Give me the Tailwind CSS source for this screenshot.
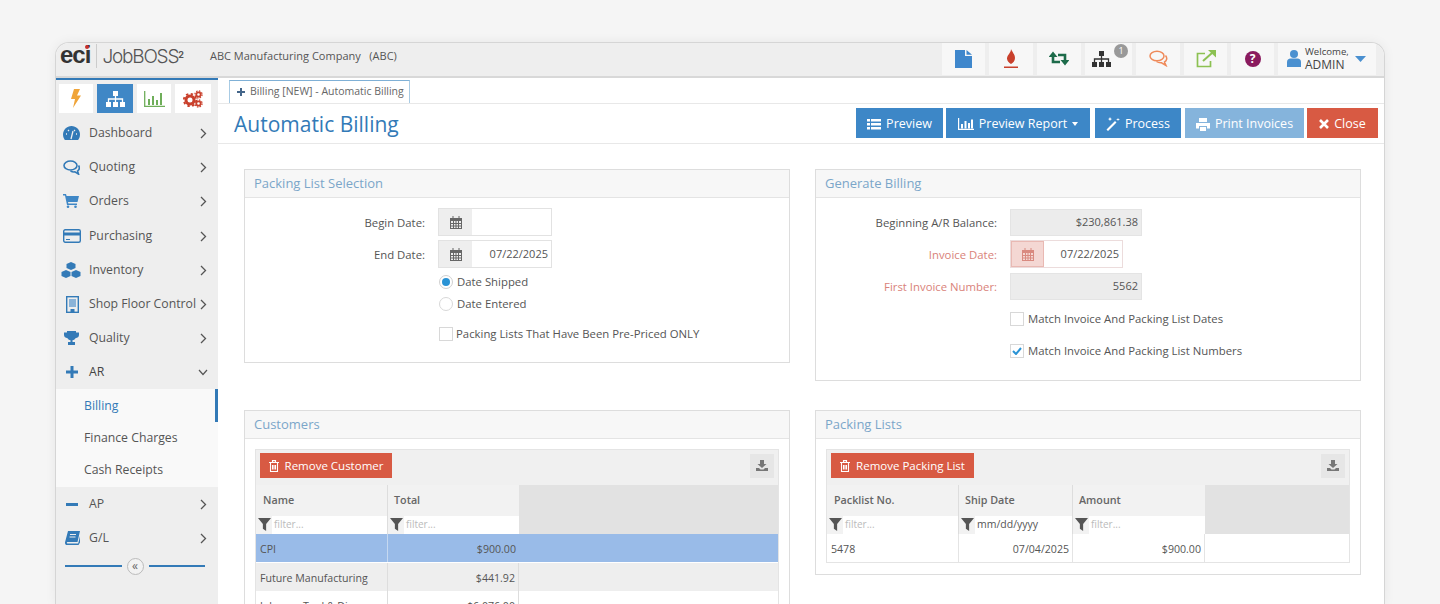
<!DOCTYPE html>
<html>
<head>
<meta charset="utf-8">
<script src="https://cdn.jsdelivr.net/npm/@tailwindcss/browser@4"></script>
</head>
<body class="bg-[#f5f5f5] h-[604px] overflow-hidden font-['Open_Sans',sans-serif] text-[11.35px] text-[#555]">
<div class="mx-[55px] mt-[42px] h-[562px] rounded-t-[14px] border-x border-t border-[#d5d5d5] bg-white shadow-[0_0_12px_rgba(0,0,0,0.06)] overflow-hidden flex flex-col">

  <header class="h-[35px] shrink-0 bg-[#eeeeee] border-b-2 border-[#d8d8d8] flex items-center pl-[4px]">
    <div class="flex items-center w-[150px] shrink-0 mb-[7px]">
      <span class="relative font-['Liberation_Sans',sans-serif] font-bold text-[24px] leading-none tracking-[-1px] text-[#333] -top-[1px]">eci<span class="absolute right-[1px] top-[2px] w-[4px] h-[4px] rounded-full bg-[#c9302c]"></span></span>
      <span class="w-px h-[24px] bg-[#ccc] ml-[6px] mr-[5px]"></span>
      <span class="font-['Inter',sans-serif] font-light text-[19px] leading-none tracking-[-1.2px] text-[#555]">JobBOSS<sup class="font-bold text-[9px]">2</sup></span>
    </div>
    <span class="text-[11px] text-[#555] mb-[7px]">ABC Manufacturing Company&nbsp;&nbsp; (ABC)</span>
    <div class="ml-auto flex items-center gap-[4px] pr-[8px] h-[32px] mb-[2px]">
      <div class="w-[43px] h-[32px] bg-[#f7f7f7] flex items-center justify-center">
        <svg class="w-[17px] h-[18px]" viewBox="0 0 17 18"><path fill="#3f87cc" d="M0 0h10v6h7v12H0z"/><path fill="#3f87cc" d="M11.500 0 17 4.700h-5.500z"/></svg>
      </div>
      <div class="w-[44px] h-[32px] bg-[#f7f7f7] flex items-center justify-center">
        <svg class="w-[16px] h-[20px]" viewBox="0 0 16 20"><path fill="#c9402c" d="M8 0c1 3 4 5 4 9 0 3-2 5-4 6-2-1-4-3-4-5.500C4 6 8 4 8 0z"/><rect x="1" y="17.500" width="14" height="1.500" fill="#c9402c"/></svg>
      </div>
      <div class="w-[44px] h-[32px] bg-[#f7f7f7] flex items-center justify-center">
        <svg class="w-[20px] h-[15px]" viewBox="0 0 20 15"><path fill="none" stroke="#1d6b4a" stroke-width="2.600" d="M4 5v6h7M16 10V4H9"/><path fill="#1d6b4a" d="M-.5 6 4 .5 8.500 6zM11.500 9 16 14.500 20.500 9z"/></svg>
      </div>
      <div class="w-[47px] h-[32px] bg-[#f7f7f7] flex items-center pl-[7px] relative">
        <svg class="w-[19px] h-[16px]" viewBox="0 0 19 16"><path fill="#333" d="M7 0h5v5H7zM0 11h5v5H0zM7 11h5v5H7zM14 11h5v5h-5z"/><path fill="none" stroke="#333" stroke-width="1.300" d="M9.500 5v6M2.500 11V8h14v3"/></svg>
        <span class="absolute right-[4px] top-[1px] w-[14px] h-[14px] rounded-full bg-[#999] text-white text-[9px] leading-[14px] text-center">1</span>
      </div>
      <div class="w-[44px] h-[32px] bg-[#f7f7f7] flex items-center justify-center">
        <svg class="w-[19px] h-[17px]" viewBox="0 0 19 17"><ellipse cx="8" cy="6" rx="7" ry="4.800" fill="none" stroke="#ef8a5a" stroke-width="1.500"/><path fill="none" stroke="#ef8a5a" stroke-width="1.500" d="M16.500 5.500c2 2.500 1.500 5-1 6.500l1.500 3.500-4.500-2.700c-2 .2-3.500-.2-5-1.300"/></svg>
      </div>
      <div class="w-[43px] h-[32px] bg-[#f7f7f7] flex items-center justify-center">
        <svg class="w-[20px] h-[18px]" viewBox="0 0 20 18"><path fill="none" stroke="#8cc152" stroke-width="1.700" d="M9 3.500H1.500v13h13V11"/><path fill="none" stroke="#8cc152" stroke-width="2" d="M7 11 16 3"/><path fill="#8cc152" d="M12 0h8v7.500z"/></svg>
      </div>
      <div class="w-[43px] h-[32px] bg-[#f7f7f7] flex items-center justify-center">
        <span class="w-[16px] h-[16px] rounded-full bg-[#8a1a5e] text-white font-bold text-[12px] leading-[16px] text-center">?</span>
      </div>
      <div class="w-[98px] h-[32px] bg-[#f7f7f7] flex items-center pl-[9px]">
        <svg class="w-[14px] h-[17px] shrink-0" viewBox="0 0 14 17"><circle cx="7" cy="4" r="4" fill="#4a90d0"/><path fill="#4a90d0" d="M0 17v-5c0-2 1.500-3.500 3.500-3.500h7c2 0 3.500 1.500 3.500 3.500v5z"/></svg>
        <div class="ml-[4px] leading-none">
          <div class="text-[9.600px] leading-[12px] text-[#444]">Welcome,</div>
          <div class="text-[12px] leading-[13px] text-[#444]">ADMIN</div>
        </div>
        <svg class="w-[11px] h-[6px] ml-[6px]" viewBox="0 0 11 6"><path fill="#4a90d0" d="M0 0h11L5.500 6z"/></svg>
      </div>
    </div>
  </header>

  <div class="flex flex-1 min-h-0">
    <aside class="w-[162px] shrink-0 bg-[#eeeeee] border-t-2 border-[#337ab7] text-[12.250px]">
      <div class="flex gap-[4px] pl-[3px] pt-[4px] h-[34px]">
        <div class="w-[34px] h-[29px] bg-white flex items-center justify-center">
          <svg class="w-[10px] h-[19px]" viewBox="0 0 10 19"><path fill="#f0a53a" d="M3 0h6L6 6.500h4L2 19l2-9H0z"/></svg>
        </div>
        <div class="w-[36px] h-[29px] bg-[#3f87c6] flex items-center justify-center">
          <svg class="w-[19px] h-[16px]" viewBox="0 0 19 16"><path fill="#fff" d="M7 0h5v5H7zM0 11h5v5H0zM7 11h5v5H7zM14 11h5v5h-5z"/><path fill="none" stroke="#fff" stroke-width="1.300" d="M9.500 5v6M2.500 11V8h14v3"/></svg>
        </div>
        <div class="w-[34px] h-[29px] bg-white flex items-center justify-center">
          <svg class="w-[21px] h-[16px]" viewBox="0 0 21 16"><path fill="none" stroke="#6fae5a" stroke-width="1.300" d="M.7 0v15.300H21"/><path fill="#6fae5a" d="M4 8h2v6H4zM8 5h2v9H8zM12 9h2v5h-2zM16 2h2v12h-2z"/></svg>
        </div>
        <div class="w-[36px] h-[29px] bg-white flex items-center justify-center">
          <svg class="w-[20px] h-[18px]" viewBox="0 0 20 18"><g fill="none" stroke="#c9402c"><circle cx="7" cy="10" r="4" stroke-width="3"/><circle cx="7" cy="10" r="6.200" stroke-width="1.800" stroke-dasharray="2.400 2.470"/><circle cx="15.500" cy="4.500" r="2.200" stroke-width="1.800"/><circle cx="15.500" cy="4.500" r="3.600" stroke-width="1.200" stroke-dasharray="1.500 1.330"/><circle cx="15.500" cy="13.500" r="2.200" stroke-width="1.800"/><circle cx="15.500" cy="13.500" r="3.600" stroke-width="1.200" stroke-dasharray="1.500 1.330"/></g></svg>
        </div>
      </div>

      <nav class="pt-[2px]">
        <div class="h-[34px] flex items-center pl-[7px] pr-[11px]">
          <span class="w-[26px] shrink-0"><svg class="w-[17px] h-[14px]" viewBox="0 0 17 14"><path fill="#337ab7" d="M8.500 0C3.800 0 0 3.800 0 8.500c0 2 .7 3.900 1.900 5.500h13.200c1.200-1.600 1.900-3.500 1.900-5.500C17 3.800 13.200 0 8.500 0z"/><path fill="none" stroke="#eee" stroke-width="1.300" d="M8 13 10 5M3 8h1M5 4l1 1M13 8h1M12 4l-1 1"/></svg></span>
          <span>Dashboard</span><svg class="ml-auto w-[7px] h-[11px]" viewBox="0 0 7 11"><path fill="none" stroke="#555" stroke-width="1.300" d="M1 1l4.500 4.500L1 10"/></svg>
        </div>
        <div class="h-[34px] flex items-center pl-[7px] pr-[11px]">
          <span class="w-[26px] shrink-0"><svg class="w-[17px] h-[15px]" viewBox="0 0 17 15"><ellipse cx="7.500" cy="5.500" rx="6.500" ry="4.500" fill="none" stroke="#337ab7" stroke-width="1.600"/><path fill="none" stroke="#337ab7" stroke-width="1.600" d="M15.500 5.500c1.300 2 .8 4.300-1 5.600l1 3-3.600-2.200c-1.600.2-3.100-.1-4.400-1"/></svg></span>
          <span>Quoting</span><svg class="ml-auto w-[7px] h-[11px]" viewBox="0 0 7 11"><path fill="none" stroke="#555" stroke-width="1.300" d="M1 1l4.500 4.500L1 10"/></svg>
        </div>
        <div class="h-[34px] flex items-center pl-[7px] pr-[11px]">
          <span class="w-[26px] shrink-0"><svg class="w-[16px] h-[14px]" viewBox="0 0 16 14"><path fill="#3f87c6" d="M0 0h3l.6 2H16l-1.500 6H5l.4 1.500H14V11H4L2 1.500H0z"/><circle cx="5" cy="12.700" r="1.300" fill="#3f87c6"/><circle cx="12.500" cy="12.700" r="1.300" fill="#3f87c6"/></svg></span>
          <span>Orders</span><svg class="ml-auto w-[7px] h-[11px]" viewBox="0 0 7 11"><path fill="none" stroke="#555" stroke-width="1.300" d="M1 1l4.500 4.500L1 10"/></svg>
        </div>
        <div class="h-[34px] mt-[1px] flex items-center pl-[7px] pr-[11px]">
          <span class="w-[26px] shrink-0"><svg class="w-[18px] h-[14px]" viewBox="0 0 18 14"><rect x=".7" y=".7" width="16.600" height="12.600" rx="1.500" fill="none" stroke="#337ab7" stroke-width="1.400"/><rect y="3.500" width="18" height="3" fill="#337ab7"/><path stroke="#337ab7" d="M3 10.500h4"/></svg></span>
          <span>Purchasing</span><svg class="ml-auto w-[7px] h-[11px]" viewBox="0 0 7 11"><path fill="none" stroke="#555" stroke-width="1.300" d="M1 1l4.500 4.500L1 10"/></svg>
        </div>
        <div class="h-[34px] flex items-center pl-[5px] pr-[11px]">
          <span class="w-[28px] shrink-0"><svg class="w-[20px] h-[16px]" viewBox="0 0 20 16"><path fill="#337ab7" d="M10 0l4.500 2v4L10 8 5.500 6V2zM5 8l4.500 2v4L5 16 .5 14v-4zM15 8l4.500 2v4L15 16l-4.500-2v-4z"/></svg></span>
          <span>Inventory</span><svg class="ml-auto w-[7px] h-[11px]" viewBox="0 0 7 11"><path fill="none" stroke="#555" stroke-width="1.300" d="M1 1l4.500 4.500L1 10"/></svg>
        </div>
        <div class="h-[34px] flex items-center pl-[10px] pr-[11px]">
          <span class="w-[23px] shrink-0"><svg class="w-[13px] h-[17px]" viewBox="0 0 13 17"><rect x=".7" y=".7" width="11.600" height="15.600" fill="none" stroke="#337ab7" stroke-width="1.400"/><path fill="#8ab3d8" d="M3 3h7v8H3z"/><rect x="4.500" y="13" width="4" height="3.500" fill="#337ab7"/></svg></span>
          <span class="whitespace-nowrap">Shop Floor Control</span><svg class="ml-auto w-[7px] h-[11px] shrink-0" viewBox="0 0 7 11"><path fill="none" stroke="#555" stroke-width="1.300" d="M1 1l4.500 4.500L1 10"/></svg>
        </div>
        <div class="h-[34px] flex items-center pl-[8px] pr-[11px]">
          <span class="w-[25px] shrink-0"><svg class="w-[15px] h-[14px]" viewBox="0 0 15 14"><path fill="#337ab7" d="M3 0h9v1.500h3V4c0 1.700-1.500 3-3.500 3.200C10.800 8.400 9.700 9 8.500 9.200V11H11v3H4v-3h2.500V9.200C5.300 9 4.200 8.400 3.500 7.200 1.500 7 0 5.700 0 4V1.500h3z"/></svg></span>
          <span>Quality</span><svg class="ml-auto w-[7px] h-[11px]" viewBox="0 0 7 11"><path fill="none" stroke="#555" stroke-width="1.300" d="M1 1l4.500 4.500L1 10"/></svg>
        </div>
        <div class="h-[34px] flex items-center pl-[10px] pr-[11px]">
          <span class="w-[23px] shrink-0"><svg class="w-[12px] h-[12px]" viewBox="0 0 12 12"><path fill="#337ab7" d="M4.500 0h3v4.500H12v3H7.500V12h-3V7.500H0v-3h4.500z"/></svg></span>
          <span class="text-[#444]">AR</span><svg class="ml-auto w-[10px] h-[7px] -mr-[1px]" viewBox="0 0 10 7"><path fill="none" stroke="#555" stroke-width="1.200" d="M1 1l4 4.500L9 1"/></svg>
        </div>
        <div class="bg-[#f9f9f9] h-[98px] pt-[1px] relative">
          <span class="absolute right-0 top-0 w-[3px] h-[33px] bg-[#337ab7]"></span>
          <div class="h-[32px] flex items-center pl-[28px] text-[#337ab7]">Billing</div>
          <div class="h-[32px] flex items-center pl-[28px]">Finance Charges</div>
          <div class="h-[33px] flex items-center pl-[28px]">Cash Receipts</div>
        </div>
        <div class="h-[34px] flex items-center pl-[10px] pr-[11px]">
          <span class="w-[23px] shrink-0"><span class="block w-[12px] h-[3px] bg-[#337ab7]"></span></span>
          <span>AP</span><svg class="ml-auto w-[7px] h-[11px]" viewBox="0 0 7 11"><path fill="none" stroke="#555" stroke-width="1.300" d="M1 1l4.500 4.500L1 10"/></svg>
        </div>
        <div class="h-[34px] flex items-center pl-[9px] pr-[11px]">
          <span class="w-[24px] shrink-0"><svg class="w-[15px] h-[14px]" viewBox="0 0 15 14"><path fill="#337ab7" d="M3 0h12l-2.500 11H2.500c-.8 0-1 1.500 0 1.500h10.700L15 5v6.500L13.500 14H2C.5 14-.3 12.600.1 11z"/><path stroke="#eee" d="M5 3.500h6M4.500 6h6"/></svg></span>
          <span>G/L</span><svg class="ml-auto w-[7px] h-[11px]" viewBox="0 0 7 11"><path fill="none" stroke="#555" stroke-width="1.300" d="M1 1l4.500 4.500L1 10"/></svg>
        </div>
        <div class="flex items-center pl-[9px] pr-[13px] h-[22px]">
          <span class="flex-1 h-[2px] bg-[#337ab7]"></span>
          <span class="w-[17px] h-[17px] mx-[5px] rounded-full border border-[#bbb] bg-[#f2f2f2] text-[#666] text-[12px] leading-[13px] text-center">«</span>
          <span class="flex-1 h-[2px] bg-[#337ab7]"></span>
        </div>
      </nav>
    </aside>

    <main class="flex-1 min-w-0 bg-white">
      <div class="h-[25px] pl-[11px] pt-[2px]">
        <div class="h-[23px] w-[181px] border border-b-0 border-[#a8cbe4] border-t-[#7fb0d6] flex items-center pl-[7px] text-[10.500px] text-[#666] whitespace-nowrap">
          <svg class="w-[8px] h-[8px] mr-[5px]" viewBox="0 0 12 12"><path fill="#44668a" d="M4.500 0h3v4.500H12v3H7.500V12h-3V7.500H0v-3h4.500z"/></svg>Billing [NEW] - Automatic Billing
        </div>
      </div>
      <div class="h-[41px] border-t border-b border-[#e8e8e8] flex items-center pl-[16px] pr-[6px] pb-[1px]">
        <h1 class="text-[21px] text-[#337ab7] leading-none mt-[2px]">Automatic Billing</h1>
        <div class="ml-auto flex h-[30px] text-[12.500px] text-white">
          <div class="w-[87px] pt-[2px] bg-[#3d87c7] flex items-center justify-center gap-[5px]">
            <svg class="w-[14px] h-[11px]" viewBox="0 0 14 11"><path fill="#fff" d="M0 0h3v2.500H0zM4 0h10v2.500H4zM0 4h3v2.500H0zM4 4h10v2.500H4zM0 8h3v2.500H0zM4 8h10v2.500H4z"/></svg>Preview
          </div>
          <div class="w-[144px] pt-[2px] ml-[3px] bg-[#3d87c7] flex items-center justify-center gap-[5px]">
            <svg class="w-[16px] h-[12px]" viewBox="0 0 16 12"><path fill="none" stroke="#fff" stroke-width="1.200" d="M.6 0v11.400H16"/><path fill="#fff" d="M3 6h2v4.500H3zM6.500 3h2v7.500h-2zM10 5h2v5.500h-2zM13 1.500h2v9h-2z"/></svg>Preview Report
            <svg class="w-[6px] h-[4px]" viewBox="0 0 6 4"><path fill="#fff" d="M0 0h6L3 4z"/></svg>
          </div>
          <div class="w-[86px] pt-[2px] ml-[5px] bg-[#3d87c7] flex items-center justify-center gap-[5px]">
            <svg class="w-[14px] h-[14px]" viewBox="0 0 14 14"><path fill="#fff" d="M9 4l1.500 1.500L2 14 .5 12.500zM4 0l.7 1.500L6 2l-1.300.7L4 4l-.7-1.300L2 2l1.300-.5zM12 1l.5 1L14 2.500l-1.500.5-.5 1-.5-1L10 2.500l1.500-.5z"/></svg>Process
          </div>
          <div class="w-[119px] pt-[2px] ml-[4px] bg-[#85b4dc] flex items-center justify-center gap-[5px]">
            <svg class="w-[14px] h-[13px]" viewBox="0 0 14 13"><path fill="#fff" d="M3 0h8v4H3zM0 5h14v5.500h-3V8H3v2.500H0zM4 9h6v4H4z"/></svg>Print Invoices
          </div>
          <div class="w-[71px] pt-[2px] ml-[3px] bg-[#d85a43] flex items-center justify-center gap-[5px]">
            <svg class="w-[10px] h-[10px]" viewBox="0 0 10 10"><path stroke="#fff" stroke-width="2.600" d="M1 1l8 8M9 1l-8 8"/></svg>Close
          </div>
        </div>
      </div>

      <div class="pl-[26px] pr-[23px] pt-[25px] grid grid-cols-2 gap-x-[25px]">
        <section class="h-[194px] border border-[#ddd]">
          <div class="h-[28px] bg-[#f7f7f7] border-b border-[#e4e4e4] pl-[9px] flex items-center text-[13px] text-[#7ba6c9]">Packing List Selection</div>
          <div class="pt-[10px]">
            <div class="flex items-center h-[28px]">
              <label class="w-[180px] text-right pt-[2px]">Begin Date:</label>
              <div class="ml-[13px] flex w-[114px] h-[28px] border border-[#e2e2e2]">
                <span class="w-[33px] bg-[#eeeeee] flex items-center justify-center"><svg class="w-[12px] h-[13px]" viewBox="0 0 12 13"><path fill="#666" d="M0 2h12v11H0z"/><path fill="#eee" d="M1 5h10v7H1z"/><path stroke="#666" d="M0 7.500h12M0 10h12M3.500 5v7M6 5v7M8.500 5v7M3 0v3M9 0v3"/></svg></span>
                <span class="flex-1"></span>
              </div>
            </div>
            <div class="flex items-center h-[28px] mt-[4px]">
              <label class="w-[180px] text-right pt-[2px]">End Date:</label>
              <div class="ml-[13px] flex w-[114px] h-[28px] border border-[#e2e2e2]">
                <span class="w-[33px] bg-[#eeeeee] flex items-center justify-center"><svg class="w-[12px] h-[13px]" viewBox="0 0 12 13"><path fill="#666" d="M0 2h12v11H0z"/><path fill="#eee" d="M1 5h10v7H1z"/><path stroke="#666" d="M0 7.500h12M0 10h12M3.500 5v7M6 5v7M8.500 5v7M3 0v3M9 0v3"/></svg></span>
                <span class="flex-1 flex items-center justify-end pr-[3px] text-[11px]">07/22/2025</span>
              </div>
            </div>
            <div class="flex items-center h-[22px] mt-[3px] pl-[194px]">
              <span class="w-[14px] h-[14px] rounded-full border border-[#d0d0d0] flex items-center justify-center"><span class="w-[8px] h-[8px] rounded-full bg-[#2a93d5]"></span></span>
              <span class="ml-[4px]">Date Shipped</span>
            </div>
            <div class="flex items-center h-[22px] pl-[194px]">
              <span class="w-[14px] h-[14px] rounded-full border border-[#d8d8d8]"></span>
              <span class="ml-[4px]">Date Entered</span>
            </div>
            <div class="flex items-center h-[22px] mt-[8px] pl-[194px]">
              <span class="w-[14px] h-[14px] border border-[#d8d8d8]"></span>
              <span class="ml-[3px]">Packing Lists That Have Been Pre-Priced ONLY</span>
            </div>
          </div>
        </section>

        <section class="h-[212px] border border-[#ddd]">
          <div class="h-[28px] bg-[#f7f7f7] border-b border-[#e4e4e4] pl-[9px] flex items-center text-[13px] text-[#7ba6c9]">Generate Billing</div>
          <div class="pt-[10px]">
            <div class="flex items-center h-[28px]">
              <label class="w-[181px] text-right pt-[2px]">Beginning A/R Balance:</label>
              <div class="ml-[13px] w-[132px] h-[27px] bg-[#ececec] border border-[#e4e4e4] flex items-center justify-end pr-[3px] text-[11px]">$230,861.38</div>
            </div>
            <div class="flex items-center h-[28px] mt-[4px]">
              <label class="w-[181px] text-right text-[#d9827a] pt-[2px]">Invoice Date:</label>
              <div class="ml-[13px] flex w-[113px] h-[28px] border border-[#ecdcdc]">
                <span class="w-[33px] bg-[#f4d7d3] border border-[#e9b9b3] flex items-center justify-center"><svg class="w-[12px] h-[13px]" viewBox="0 0 12 13"><path fill="#d98a80" d="M0 2h12v11H0z"/><path fill="#f4d7d3" d="M1 5h10v7H1z"/><path stroke="#d98a80" d="M0 7.500h12M0 10h12M3.500 5v7M6 5v7M8.500 5v7M3 0v3M9 0v3"/></svg></span>
                <span class="flex-1 flex items-center justify-end pr-[3px] text-[11px]">07/22/2025</span>
              </div>
            </div>
            <div class="flex items-center h-[28px] mt-[4px]">
              <label class="w-[181px] text-right text-[#d9827a] pt-[2px]">First Invoice Number:</label>
              <div class="ml-[13px] w-[132px] h-[27px] bg-[#ececec] border border-[#e4e4e4] flex items-center justify-end pr-[3px] text-[11px]">5562</div>
            </div>
            <div class="flex items-center h-[22px] mt-[8px] pl-[194px]">
              <span class="w-[14px] h-[14px] border border-[#d8d8d8]"></span>
              <span class="ml-[4px]">Match Invoice And Packing List Dates</span>
            </div>
            <div class="flex items-center h-[22px] mt-[10px] pl-[194px]">
              <span class="w-[14px] h-[14px] border border-[#d8d8d8] flex items-center justify-center"><svg class="w-[10px] h-[8px]" viewBox="0 0 10 8"><path fill="none" stroke="#2a93d5" stroke-width="2" d="M1 4l3 3 5-6"/></svg></span>
              <span class="ml-[4px]">Match Invoice And Packing List Numbers</span>
            </div>
          </div>
        </section>
      </div>

      <div class="pl-[26px] pr-[23px] mt-[29px] grid grid-cols-2 gap-x-[25px] items-start">
        <section class="border border-[#ddd] h-[260px] overflow-hidden">
          <div class="h-[28px] bg-[#f7f7f7] border-b border-[#e4e4e4] pl-[9px] flex items-center text-[13px] text-[#7ba6c9]">Customers</div>
          <div class="mx-[10px] mt-[10px] border border-[#e4e4e4]">
            <div class="h-[35px] bg-[#f0f0f0] px-[4px] pb-[4px] flex items-center">
              <div class="w-[132px] h-[25px] bg-[#d85a43] text-white flex items-center justify-center gap-[6px] text-[11.500px]">
                <svg class="w-[10px] h-[12px]" viewBox="0 0 10 12"><path fill="none" stroke="#fff" stroke-width="1.100" d="M1.500 3v8.500h7V3M0 2.500h10M3.500 2.500V.6h3v1.900M3.500 5v4.500M5 5v4.500M6.500 5v4.500"/></svg>Remove Customer
              </div>
              <div class="ml-auto w-[24px] h-[24px] bg-[#e6e6e6] flex items-center justify-center">
                <svg class="w-[12px] h-[11px]" viewBox="0 0 12 11"><path fill="#777" d="M4 0h4v4h2.500L6 8 1.500 4H4zM0 8h3l1.500 1.500h3L9 8h3v3H0z"/></svg>
              </div>
            </div>
            <div class="grid grid-cols-[132px_131px_1fr] bg-[#e2e2e2]">
              <div class="bg-[#f2f2f2] border-r border-[#ddd]">
                <div class="h-[30px] flex items-center pl-[7px] text-[10.750px] font-semibold text-[#666]">Name</div>
                <div class="h-[19px] flex items-center pl-[2px] gap-[1px]">
                  <svg class="w-[13px] h-[13px]" viewBox="0 0 12 12"><path fill="#555" d="M0 0h12L7.500 5.500V12l-3-2V5.500z"/></svg>
                  <span class="flex-1 h-[18px] bg-white text-[10px] text-[#bbb] pl-[2px] leading-[16px]">filter...</span>
                </div>
              </div>
              <div class="bg-[#f2f2f2]">
                <div class="h-[30px] flex items-center pl-[6px] text-[10.750px] font-semibold text-[#666]">Total</div>
                <div class="h-[19px] flex items-center pl-[2px] gap-[1px]">
                  <svg class="w-[13px] h-[13px]" viewBox="0 0 12 12"><path fill="#555" d="M0 0h12L7.500 5.500V12l-3-2V5.500z"/></svg>
                  <span class="flex-1 h-[18px] bg-white text-[10px] text-[#bbb] pl-[2px] leading-[16px]">filter...</span>
                </div>
              </div>
              <div></div>
            </div>
            <div class="grid grid-cols-[132px_131px_1fr] h-[28px] bg-[#99bbe8] text-[10.600px]">
              <span class="pl-[4px] pt-[3px] border-r border-[#c5d8f0] h-full flex items-center">CPI</span><span class="pr-[3px] pt-[3px] h-full flex items-center justify-end">$900.00</span><span></span>
            </div>
            <div class="grid grid-cols-[132px_131px_1fr] h-[28px] mt-px bg-[#eeeeee] text-[10.600px]">
              <span class="pl-[4px] pt-[3px] border-r border-[#ddd] h-full flex items-center">Future Manufacturing</span><span class="pr-[3px] pt-[3px] border-r border-[#ddd] h-full flex items-center justify-end">$441.92</span><span></span>
            </div>
            <div class="grid grid-cols-[132px_131px_1fr] h-[28px] text-[10.600px]">
              <span class="pl-[4px] pt-[3px] border-r border-[#ddd] h-full flex items-center">Johnson Tool &amp; Die</span><span class="pr-[3px] pt-[3px] border-r border-[#ddd] h-full flex items-center justify-end">$6,076.00</span><span></span>
            </div>
          </div>
        </section>

        <section class="border border-[#ddd] h-[165px]">
          <div class="h-[28px] bg-[#f7f7f7] border-b border-[#e4e4e4] pl-[9px] flex items-center text-[13px] text-[#7ba6c9]">Packing Lists</div>
          <div class="mx-[10px] mt-[10px] border border-[#e4e4e4]">
            <div class="h-[35px] bg-[#f0f0f0] px-[4px] pb-[4px] flex items-center">
              <div class="w-[143px] h-[25px] bg-[#d85a43] text-white flex items-center justify-center gap-[6px] text-[11.500px]">
                <svg class="w-[10px] h-[12px]" viewBox="0 0 10 12"><path fill="none" stroke="#fff" stroke-width="1.100" d="M1.500 3v8.500h7V3M0 2.500h10M3.500 2.500V.6h3v1.900M3.500 5v4.500M5 5v4.500M6.500 5v4.500"/></svg>Remove Packing List
              </div>
              <div class="ml-auto w-[24px] h-[24px] bg-[#e6e6e6] flex items-center justify-center">
                <svg class="w-[12px] h-[11px]" viewBox="0 0 12 11"><path fill="#777" d="M4 0h4v4h2.500L6 8 1.500 4H4zM0 8h3l1.500 1.500h3L9 8h3v3H0z"/></svg>
              </div>
            </div>
            <div class="grid grid-cols-[132px_114px_132px_1fr] bg-[#e2e2e2]">
              <div class="bg-[#f2f2f2] border-r border-[#ddd]">
                <div class="h-[30px] flex items-center pl-[7px] text-[10.750px] font-semibold text-[#666]">Packlist No.</div>
                <div class="h-[19px] flex items-center pl-[2px] gap-[1px]">
                  <svg class="w-[13px] h-[13px]" viewBox="0 0 12 12"><path fill="#555" d="M0 0h12L7.500 5.500V12l-3-2V5.500z"/></svg>
                  <span class="flex-1 h-[18px] bg-white text-[10px] text-[#bbb] pl-[2px] leading-[16px]">filter...</span>
                </div>
              </div>
              <div class="bg-[#f2f2f2] border-r border-[#ddd]">
                <div class="h-[30px] flex items-center pl-[6px] text-[10.750px] font-semibold text-[#666]">Ship Date</div>
                <div class="h-[19px] flex items-center pl-[2px] gap-[1px]">
                  <svg class="w-[13px] h-[13px]" viewBox="0 0 12 12"><path fill="#555" d="M0 0h12L7.500 5.500V12l-3-2V5.500z"/></svg>
                  <span class="flex-1 h-[18px] bg-white text-[10.500px] text-[#555] pl-[2px] leading-[16px]">mm/dd/yyyy</span>
                </div>
              </div>
              <div class="bg-[#f2f2f2]">
                <div class="h-[30px] flex items-center pl-[6px] text-[10.750px] font-semibold text-[#666]">Amount</div>
                <div class="h-[19px] flex items-center pl-[2px] gap-[1px]">
                  <svg class="w-[13px] h-[13px]" viewBox="0 0 12 12"><path fill="#555" d="M0 0h12L7.500 5.500V12l-3-2V5.500z"/></svg>
                  <span class="flex-1 h-[18px] bg-white text-[10px] text-[#bbb] pl-[2px] leading-[16px]">filter...</span>
                </div>
              </div>
              <div></div>
            </div>
            <div class="grid grid-cols-[132px_114px_132px_1fr] h-[28px] text-[10.600px]">
              <span class="pl-[4px] pt-[3px] border-r border-[#e4e4e4] h-full flex items-center">5478</span>
              <span class="pr-[3px] pt-[3px] border-r border-[#e4e4e4] h-full flex items-center justify-end">07/04/2025</span>
              <span class="pr-[3px] pt-[3px] border-r border-[#e4e4e4] h-full flex items-center justify-end">$900.00</span>
              <span></span>
            </div>
          </div>
        </section>
      </div>
    </main>
  </div>
</div>
</body>
</html>
